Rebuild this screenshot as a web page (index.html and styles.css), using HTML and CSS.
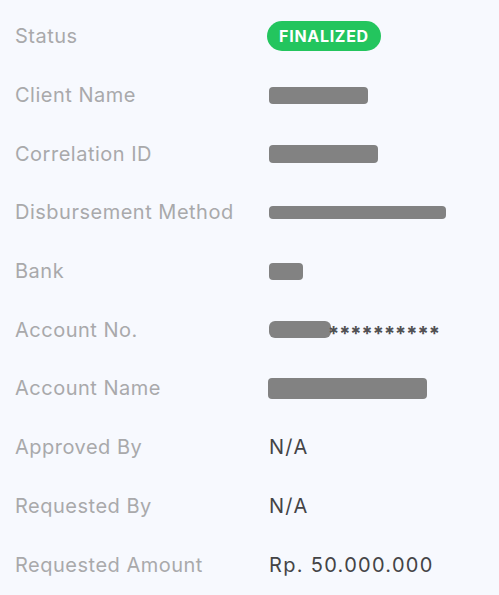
FILE: index.html
```html
<!DOCTYPE html>
<html>
<head>
<meta charset="utf-8">
<link rel="stylesheet" href="styles.css">
</head>
<body>
<div class="list">
  <div class="row"><div class="label">Status</div><div class="value"><span class="badge">FINALIZED</span></div></div>
  <div class="row"><div class="label">Client Name</div><div class="value"><span class="redact r-client"></span></div></div>
  <div class="row"><div class="label">Correlation ID</div><div class="value"><span class="redact r-corr"></span></div></div>
  <div class="row"><div class="label">Disbursement Method</div><div class="value"><span class="redact r-disb"></span></div></div>
  <div class="row"><div class="label">Bank</div><div class="value"><span class="redact r-bank"></span></div></div>
  <div class="row"><div class="label">Account No.</div><div class="value"><span class="redact r-acc"></span><span class="stars">**********</span></div></div>
  <div class="row"><div class="label">Account Name</div><div class="value"><span class="redact r-name"></span></div></div>
  <div class="row"><div class="label">Approved By</div><div class="value">N/A</div></div>
  <div class="row"><div class="label">Requested By</div><div class="value">N/A</div></div>
  <div class="row"><div class="label">Requested Amount</div><div class="value">Rp. 50.000.000</div></div>
</div>
</body>
</html>
```
FILE: styles.css
```css
html, body {
  margin: 0;
  padding: 0;
  background: #f7f9fe;
}
body {
  font-family: Inter, "Open Sans", sans-serif;
  font-size: 20px;
}
.list {
  display: flex;
  flex-direction: column;
  padding: 7px 0 0 15px;
}
.row {
  display: grid;
  grid-template-columns: 254px 1fr;
  align-items: center;
  height: 58.7px;
}
.label {
  color: #a9a9ab;
  letter-spacing: 0.5px;
}
.value {
  color: #444446;
  display: flex;
  align-items: center;
  letter-spacing: 1.3px;
}
.badge {
  display: inline-flex;
  align-items: center;
  justify-content: center;
  background: #23c55e;
  color: #fff;
  font-weight: 700;
  font-size: 16px;
  height: 30px;
  width: 114px;
  border-radius: 15px;
  margin-left: -2px;
  letter-spacing: 0.7px;
}
.redact {
  display: inline-block;
  background: #828282;
  border-radius: 4px;
}
.r-client { width: 99px; height: 17px; }
.r-corr { width: 109px; height: 18px; }
.r-disb { width: 177px; height: 13px; }
.r-bank { width: 34px; height: 17px; }
.r-acc { width: 62px; height: 17px; border-radius: 6px; }
.r-name { width: 159px; height: 21px; margin-left: -1px; }
.stars {
  font-size: 20px;
  font-weight: 700;
  color: #505052;
  letter-spacing: 0;
  margin-top: 8px;
  margin-left: -3px;
}
```
